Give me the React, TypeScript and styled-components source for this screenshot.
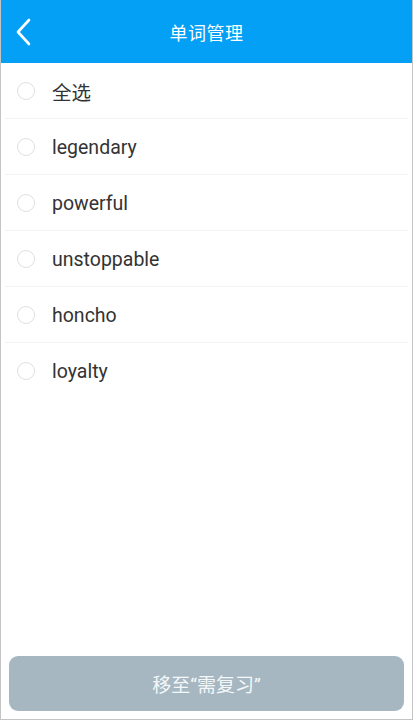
import styled, { createGlobalStyle } from 'styled-components';

const GlobalStyle = createGlobalStyle`
    body {
        margin: 0;
        font-family: Roboto, "Noto Sans CJK SC", sans-serif;
        background-color: white;
    }
`;

const Screen = styled.div`
    width: 413px;
    height: 720px;
    box-sizing: border-box;
    border: 1px solid #c4c4c4;
    border-top: none;
    display: flex;
    flex-direction: column;
    background-color: white;
`;

const Header = styled.div`
    height: 63px;
    flex-shrink: 0;
    background-color: #04a0f6;
    display: grid;
    grid-template-columns: 60px 1fr 60px;
    align-items: center;
    color: white;
    h1 {
        margin: 0;
        font-size: 18px;
        font-weight: 400;
        text-align: center;
        letter-spacing: 0.5px;
    }
`;

const BackButton = styled.button`
    height: 63px;
    display: flex;
    align-items: center;
    padding: 0 0 0 14px;
    background: none;
    border: none;
    cursor: pointer;
`;

const WordList = styled.ul`
    list-style: none;
    margin: 0;
    padding: 0;
    flex: 1;
`;

const Row = styled.li<{ $last?: boolean }>`
    height: 56px;
    box-sizing: border-box;
    margin: 0 4px;
    padding: 1px 0 0 12px;
    display: flex;
    align-items: center;
    gap: 17px;
    border-bottom: 1px solid ${({ $last }) => ($last ? 'transparent' : '#f2f2f2')};
    font-size: 19.5px;
    color: #333333;
`;

const Radio = styled.span`
    width: 18px;
    height: 18px;
    border-radius: 50%;
    border: 1.5px solid #e0e0e0;
    box-sizing: border-box;
    flex-shrink: 0;
`;

const Footer = styled.div`
    padding: 0 8px 8px 8px;
`;

const MoveButton = styled.button`
    width: 100%;
    height: 55px;
    border: none;
    border-radius: 9px;
    background-color: #a7b7c1;
    color: #f4f7f9;
    font-family: Roboto, "Noto Sans CJK SC", sans-serif;
    font-size: 19px;
    cursor: pointer;
`;

const words = ['全选', 'legendary', 'powerful', 'unstoppable', 'honcho', 'loyalty'];

const App = () => {
    return (
        <Screen>
            <GlobalStyle />
            <Header>
                <BackButton>
                    <svg width="16" height="28" viewBox="0 0 16 28">
                        <path d="M14 2 L3 14 L14 26" fill="none" stroke="white" strokeWidth="2.6" strokeLinecap="round" strokeLinejoin="round" />
                    </svg>
                </BackButton>
                <h1>单词管理</h1>
                <div />
            </Header>
            <WordList>
                {
                    words.map((word, i) => (
                        <Row key={word} $last={i === words.length - 1}>
                            <Radio />
                            {word}
                        </Row>
                    ))
                }
            </WordList>
            <Footer>
                <MoveButton>移至“需复习”</MoveButton>
            </Footer>
        </Screen>
    );
}
export default App;
